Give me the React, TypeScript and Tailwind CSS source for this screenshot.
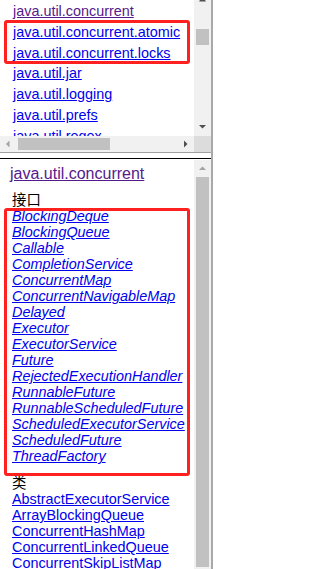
import React from "react";

const topItems = [
  { t: "java.util.concurrent", v: true },
  { t: "java.util.concurrent.atomic" },
  { t: "java.util.concurrent.locks" },
  { t: "java.util.jar" },
  { t: "java.util.logging" },
  { t: "java.util.prefs" },
  { t: "java.util.regex" },
];

const interfaces = [
  "BlockingDeque",
  "BlockingQueue",
  "Callable",
  "CompletionService",
  "ConcurrentMap",
  "ConcurrentNavigableMap",
  "Delayed",
  "Executor",
  "ExecutorService",
  "Future",
  "RejectedExecutionHandler",
  "RunnableFuture",
  "RunnableScheduledFuture",
  "ScheduledExecutorService",
  "ScheduledFuture",
  "ThreadFactory",
];

const classes = [
  "AbstractExecutorService",
  "ArrayBlockingQueue",
  "ConcurrentHashMap",
  "ConcurrentLinkedQueue",
  "ConcurrentSkipListMap",
  "ConcurrentSkipListSet",
];

export default function App() {
  return (
    <div className="relative w-[213px] h-[569px] overflow-hidden bg-white font-['Liberation_Sans','Noto_Sans_CJK_SC',sans-serif] flex flex-col border-r-2 border-[#a9a9a9]">
      {/* top frame */}
      <div className="h-[152px] flex shrink-0">
        <div className="w-[194px] flex flex-col">
          <div className="h-[136px] overflow-hidden pt-[1px] pl-[13px] text-[14.4px] leading-[20.8px]">
            {topItems.map((it) => (
              <div key={it.t} className="whitespace-nowrap">
                <span className={`underline ${it.v ? "text-[#551a8b]" : "text-[#0000ee]"}`}>{it.t}</span>
              </div>
            ))}
          </div>
          <div className="h-[16px] bg-[#f1f1f1] flex items-center">
            <svg width="17" height="16" className="shrink-0">
              <polygon points="9.5,4.5 9.5,11.5 6,8" fill="#a3a3a3" />
            </svg>
            <div className="ml-[1px] w-[92px] h-[12px] bg-[#c1c1c1]" />
            <div className="flex-1" />
            <svg width="17" height="16" className="shrink-0">
              <polygon points="7,4.5 7,11.5 10.5,8" fill="#505050" />
            </svg>
          </div>
        </div>
        <div className="w-[17px] flex flex-col">
          <div className="h-[136px] bg-[#f1f1f1] flex flex-col">
            <svg width="17" height="2" className="shrink-0">
              <polygon points="5,1.5 12,1.5 11,0 6,0" fill="#505050" />
            </svg>
            <div className="mt-[27px] mx-[2px] h-[16px] bg-[#c1c1c1]" />
            <div className="flex-1" />
            <svg width="17" height="17" className="shrink-0">
              <polygon points="5,6 12,6 8.5,9.5" fill="#505050" />
            </svg>
          </div>
          <div className="h-[16px] bg-[#dcdcdc]" />
        </div>
      </div>

      {/* frame separator */}
      <div className="h-[1px] bg-[#a0a0a0] shrink-0" />
      <div className="h-[5px] shrink-0" />
      <div className="h-[1px] bg-black shrink-0" />
      <div className="h-[1px] shrink-0" />

      {/* bottom frame */}
      <div className="flex flex-1 min-h-0">
        <div className="w-[194px] overflow-hidden">
          <div className="pt-[4px] pl-[10px] text-[16px] leading-[20px] whitespace-nowrap">
            <span className="underline text-[#551a8b]">java.util.concurrent</span>
          </div>
          <div className="mt-[8px] pl-[12px] text-[14.4px] leading-[16px] text-black">接口</div>
          <div className="pl-[12px] text-[14.4px] leading-[16px] italic">
            {interfaces.map((n) => (
              <div key={n} className="whitespace-nowrap">
                <span className="underline text-[#0000ee]">{n}</span>
              </div>
            ))}
          </div>
          <div className="mt-[11px] pl-[12px] text-[14.4px] leading-[16px] text-black">类</div>
          <div className="pl-[12px] text-[14.4px] leading-[16px]">
            {classes.map((n) => (
              <div key={n} className="whitespace-nowrap">
                <span className="underline text-[#0000ee]">{n}</span>
              </div>
            ))}
          </div>
        </div>
        <div className="w-[17px] bg-[#f1f1f1] flex flex-col">
          <svg width="17" height="17" className="shrink-0">
            <polygon points="5,10 12,10 8.5,6.5" fill="#a3a3a3" />
          </svg>
          <div className="mx-[2px] h-[390px] bg-[#c1c1c1] shrink-0" />
        </div>
      </div>

      {/* red annotation boxes */}
      <div className="absolute left-[4px] top-[20px] w-[186px] h-[44px] border-[3px] border-[#ff2020] rounded-[3px]" />
      <div className="absolute left-[4px] top-[208px] w-[186px] h-[268px] border-[3px] border-[#ff2020] rounded-[3px]" />
    </div>
  );
}
